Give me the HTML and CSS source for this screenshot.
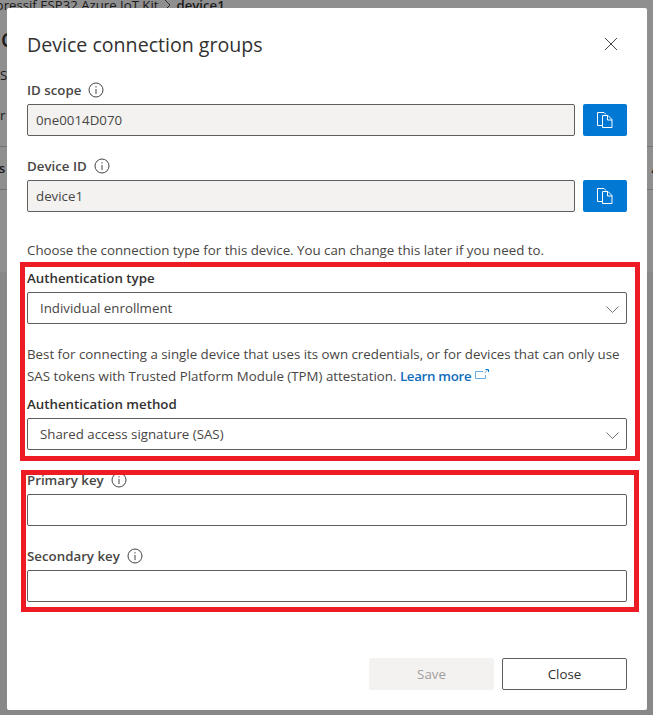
FILE: index.html
```html
<!DOCTYPE html>
<html lang="en">
<head>
<meta charset="utf-8">
<title>Device connection groups</title>
<link rel="stylesheet" href="styles.css">
</head>
<body>
<div class="page">
  <div class="page-upper">
    <div class="crumbs"><span>Espressif ESP32 Azure IoT Kit</span><svg class="crumb-sep" width="8" height="14" viewBox="0 0 8 14"><path d="M1 1l6 6-6 6" fill="none" stroke="#555" stroke-width="1"/></svg><b>device1</b></div>
    <div class="page-title">C</div>
    <div class="page-sub">S</div>
    <div class="page-sub2">r</div>
    <div class="tabs"><span>es</span><span>Ac</span></div>
  </div>
  <div class="page-lower"></div>
</div>
<div class="scrim"></div>
<main class="dialog">
  <header class="dialog-head">
    <h1>Device connection groups</h1>
    <svg class="close" width="14" height="14" viewBox="0 0 14 14"><path d="M1 1l12 12M13 1L1 13" fill="none" stroke="#444" stroke-width="1"/></svg>
  </header>

  <label class="label label-first">ID scope <svg class="info" width="16" height="16" viewBox="0 0 16 16"><circle cx="8" cy="8" r="7" fill="none" stroke="#444"/><path d="M8 7v5M8 4.200v1.300" stroke="#444" fill="none"/></svg></label>
  <div class="copy-row">
    <div class="field readonly">0ne0014D070</div>
    <button class="copy"><svg width="16" height="16" viewBox="0 0 16 16"><path d="M5.500 13.500H.5V.5H7L9 2.500" fill="none" stroke="#fff"/><path d="M5.500 15.500V3.500h5.500l4 4v8z" fill="none" stroke="#fff"/><path d="M10.500 3.500v4.500h4.500" fill="none" stroke="#fff"/></svg></button>
  </div>

  <label class="label label-next">Device ID <svg class="info" width="16" height="16" viewBox="0 0 16 16"><circle cx="8" cy="8" r="7" fill="none" stroke="#444"/><path d="M8 7v5M8 4.200v1.300" stroke="#444" fill="none"/></svg></label>
  <div class="copy-row">
    <div class="field readonly">device1</div>
    <button class="copy"><svg width="16" height="16" viewBox="0 0 16 16"><path d="M5.500 13.500H.5V.5H7L9 2.500" fill="none" stroke="#fff"/><path d="M5.500 15.500V3.500h5.500l4 4v8z" fill="none" stroke="#fff"/><path d="M10.500 3.500v4.500h4.500" fill="none" stroke="#fff"/></svg></button>
  </div>

  <p class="intro">Choose the connection type for this device. You can change this later if you need to.</p>

  <label class="label label-strong label-auth">Authentication type</label>
  <div class="field select">Individual enrollment<svg class="chev" width="13" height="7" viewBox="0 0 13 7"><path d="M.5.500l6 6 6-6" fill="none" stroke="#777"/></svg></div>

  <p class="help">Best for connecting a single device that uses its own credentials, or for devices that can only use SAS tokens with Trusted Platform Module (TPM) attestation. <a class="learn">Learn more</a> <svg class="ext" width="14" height="10" viewBox="0 0 14 10"><path d="M8 2.500H.5v7h10V6M9.500 4L13 .8" fill="none" stroke="#6aaee6"/><path d="M10.500.5H13.500V3" fill="none" stroke="#0078d4"/></svg></p>

  <label class="label label-strong label-method">Authentication method</label>
  <div class="field select">Shared access signature (SAS)<svg class="chev" width="13" height="7" viewBox="0 0 13 7"><path d="M.5.500l6 6 6-6" fill="none" stroke="#777"/></svg></div>

  <label class="label label-key">Primary key <svg class="info" width="16" height="16" viewBox="0 0 16 16"><circle cx="8" cy="8" r="7" fill="none" stroke="#444"/><path d="M8 7v5M8 4.200v1.300" stroke="#444" fill="none"/></svg></label>
  <div class="field"></div>

  <label class="label label-next">Secondary key <svg class="info" width="16" height="16" viewBox="0 0 16 16"><circle cx="8" cy="8" r="7" fill="none" stroke="#444"/><path d="M8 7v5M8 4.200v1.300" stroke="#444" fill="none"/></svg></label>
  <div class="field"></div>

  <footer class="actions">
    <button class="btn btn-disabled">Save</button>
    <button class="btn">Close</button>
  </footer>
</main>
<div class="mark mark-one"></div>
<div class="mark mark-two"></div>
</body>
</html>
```

FILE: styles.css
```css
* { box-sizing: border-box; }
html, body { margin: 0; height: 100%; }
body {
  width: 653px;
  height: 715px;
  overflow: hidden;
  position: relative;
  background: #fff;
  font-family: "Open Sans", "Noto Sans", sans-serif;
  font-size: 13.3px;
  color: #323130;
}
.page { height: 715px; overflow: hidden; display: flex; flex-direction: column; }
.page-upper { height: 272px; flex: none; overflow: hidden; }
.page-lower { flex: 1; background: #f3f3f3; }
.crumbs { display: flex; align-items: center; gap: 5px; height: 16px; margin-left: -18px; font-size: 13.2px; color: #323130; white-space: nowrap; margin-top: -3px; }
.crumb-sep { flex: none; }
.crumbs b { font-weight: 600; }
.page-title { font-size: 20px; line-height: 28px; margin-top: 13px; padding-left: 1px; font-weight: 600; }
.page-sub { line-height: 18px; margin-top: 12px; }
.page-sub2 { line-height: 18px; margin-top: 22px; }
.tabs { display: flex; justify-content: space-between; height: 44px; margin-top: 22px; border-top: 1px solid #d0d0d0; border-bottom: 1px solid #d0d0d0; line-height: 42px; margin-left: -9px; margin-right: -14px; font-weight: 600; }
.scrim { position: absolute; inset: 0; background: rgba(0, 0, 0, 0.44); }
.dialog {
  position: absolute;
  left: 7px;
  top: 8px;
  width: 640px;
  height: 702px;
  background: #fff;
  border-radius: 2px;
  padding: 0 20px;
  display: flex;
  flex-direction: column;
}
.dialog-head { display: flex; justify-content: space-between; align-items: center; height: 72px; }
.dialog-head .close { margin-right: 9px; }
h1 { margin: 0; font-size: 19.6px; font-weight: 500; color: #323130; line-height: 28px; margin-top: 2px; }
.label { display: flex; align-items: center; gap: 7px; height: 20px; line-height: 20px; font-weight: 600; color: #484644; }
.label-strong { color: #323130; }
.label-first { margin-bottom: 4px; }
.label-next { margin-top: 20px; margin-bottom: 4px; }
.label-auth { margin-top: 8px; margin-bottom: 4px; }
.label-method { margin-top: 7px; margin-bottom: 4px; }
.label-key { margin-top: 20px; margin-bottom: 4px; }
.copy-row { display: flex; gap: 8px; }
.copy-row .field { flex: 1; }
.field {
  height: 32px;
  border: 1px solid #605e5c;
  border-radius: 2px;
  line-height: 30px;
  padding: 0 8px;
  background: #fff;
}
.readonly { background: #f3f2f1; color: #484644; }
.select { padding-left: 12px; display: flex; align-items: center; justify-content: space-between; padding-right: 7px; color: #484644; }
.chev { margin-top: 2px; }
.copy { width: 44px; height: 32px; border: 0; border-radius: 2px; background: #0078d4; padding: 0; display: flex; align-items: center; justify-content: center; }
.intro { margin: 28px 0 0; line-height: 20px; color: #484644; }
.help { margin: 19px 0 0; line-height: 22px; color: #484644; }
.learn { color: #0f6cbd; font-weight: 600; letter-spacing: -0.3px; }
.ext { vertical-align: 2px; }
.actions { display: flex; justify-content: flex-end; gap: 8px; margin-top: 56px; }
.btn { width: 125px; height: 32px; border: 1px solid #605e5c; border-radius: 2px; background: #fff; color: #323130; font: inherit; padding: 0; }
.btn-disabled { background: #f3f2f1; border-color: #f3f2f1; color: #a19f9d; }
.mark { position: absolute; border: 5px solid #ed1c24; pointer-events: none; }
.mark-one { left: 20px; top: 262px; width: 620px; height: 199px; }
.mark-two { left: 21px; top: 470px; width: 618px; height: 142px; }
```
